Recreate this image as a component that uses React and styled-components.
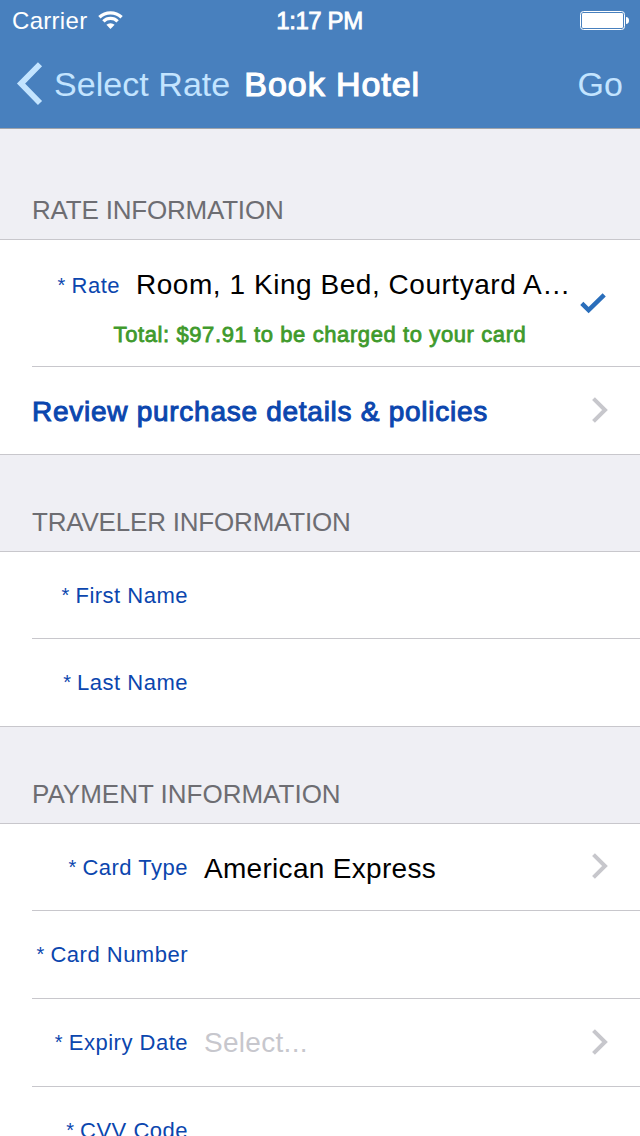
import React from 'react'
import styled, { createGlobalStyle } from 'styled-components';

const BackIcon = () => (
    <svg width="28" height="44" viewBox="0 0 28 44">
        <path d="M24 2.3 L5 21.6 L24 41" fill="none" stroke="#c3e4ff" strokeWidth="5.8" />
    </svg>
)

const WifiIcon = () => (
    <svg width="26" height="19" viewBox="0 0 26 19">
        <g fill="none" stroke="#fff" strokeWidth="3.3">
            <path d="M1.4 6.2 A16.2 16.2 0 0 1 23.6 6.2" />
            <path d="M5.4 10.4 A10 10 0 0 1 19.6 10.4" />
        </g>
        <path d="M12.5 18 L8.4 13.8 A6.2 6.2 0 0 1 16.6 13.8 Z" fill="#fff" />
    </svg>
)

const BatteryIcon = () => (
    <svg width="50" height="20" viewBox="0 0 50 20">
        <rect x="0.5" y="0.5" width="44" height="18" rx="3" fill="none" stroke="#fff" />
        <rect x="2" y="2" width="41" height="15" rx="1.2" fill="#fff" />
        <path d="M46 6 Q49 6.4 49 9.5 Q49 12.6 46 13 Z" fill="#fff" />
    </svg>
)

const CheckIcon = () => (
    <svg width="28" height="24" viewBox="0 0 28 24">
        <path d="M1.8 11.4 L8.6 18 L24.2 2.8" fill="none" stroke="#2a6ebb" strokeWidth="4.5" />
    </svg>
)

const ChevronIcon = () => (
    <Chevron width="16" height="26" viewBox="0 0 16 26">
        <path d="M1.5 1.6 L13 13 L1.5 24.4" fill="none" stroke="#c7c7cc" strokeWidth="4" />
    </Chevron>
)

const FieldLabel = ({ children, width }) => (
    <Label $width={width}><Star>*</Star> {children}</Label>
)

const Field = ({ label, value, placeholder, arrow }) => (
    <Row>
        <FieldLabel>{label}</FieldLabel>
        <Value $muted={!value}>{value || placeholder}</Value>
        {arrow && <ChevronIcon />}
    </Row>
)

const App = () => {
    return (
        <Screen>
            <GlobalStyle />
            <Header>
                <StatusBar>
                    <Carrier>Carrier <WifiIcon /></Carrier>
                    <Clock>1:17 PM</Clock>
                    <Battery><BatteryIcon /></Battery>
                </StatusBar>
                <NavBar>
                    <BackIcon />
                    <NavLink>Select Rate</NavLink>
                    <Title>Book Hotel</Title>
                    <NavLink>Go</NavLink>
                </NavBar>
            </Header>

            <SectionTitle $height={111} $spacing={-0.2}>RATE INFORMATION</SectionTitle>
            <Group>
                <RateRow>
                    <RateLine>
                        <FieldLabel width={88}>Rate</FieldLabel>
                        <Value $spacing={0.54}>Room, 1 King Bed, Courtyard A…</Value>
                    </RateLine>
                    <CheckSlot><CheckIcon /></CheckSlot>
                    <Total>Total: $97.91 to be charged to your card</Total>
                </RateRow>
                <Row>
                    <ReviewLink>Review purchase details &amp; policies</ReviewLink>
                    <ChevronIcon />
                </Row>
            </Group>

            <SectionTitle $spacing={-0.2}>TRAVELER INFORMATION</SectionTitle>
            <Group>
                <Field label="First Name" />
                <Field label="Last Name" />
            </Group>

            <SectionTitle>PAYMENT INFORMATION</SectionTitle>
            <Group>
                <Field label="Card Type" value="American Express" arrow />
                <Field label="Card Number" />
                <Field label="Expiry Date" placeholder="Select..." arrow />
                <Field label="CVV Code" />
            </Group>
        </Screen>
    )
}

export default App;

const GlobalStyle = createGlobalStyle`
    * {
        box-sizing: border-box;
    }
    body {
        margin: 0;
        overflow: hidden;
        font-family: "Liberation Sans", Arial, sans-serif;
    }
    svg {
        display: block;
        flex: none;
    }
`

const Screen = styled.div`
    width: 640px;
    height: 1136px;
    overflow: hidden;
    background: #efeff4;
`

const Header = styled.div`
    height: 129px;
    background: #4880be;
    border-bottom: 1px solid #a0a4ab;
    color: #fff;
`

const StatusBar = styled.div`
    display: grid;
    grid-template-columns: 1fr auto 1fr;
    height: 40px;
    padding: 1px 10px 0 12px;
    align-items: center;
    font-size: 24px;
    line-height: 40px;
`

const Carrier = styled.div`
    display: flex;
    align-items: center;
    gap: 11px;
    letter-spacing: 0.3px;

    svg {
        margin-bottom: 1px;
    }
`

const Clock = styled.div`
    margin-right: 3px;
    letter-spacing: -0.4px;
    -webkit-text-stroke: 0.8px #fff;
`

const Battery = styled.div`
    display: flex;
    justify-content: flex-end;
`

const NavBar = styled.div`
    display: flex;
    align-items: center;
    height: 88px;
    padding: 0 17px 0 16px;
    font-size: 34px;
`

const NavLink = styled.a`
    margin-left: 10px;
    color: #c3e4ff;
    letter-spacing: 0.05px;
`

const Title = styled.div`
    flex: 1;
    margin-left: 14px;
    letter-spacing: 0.95px;
    -webkit-text-stroke: 1.2px #fff;
`

const SectionTitle = styled.div`
    display: flex;
    align-items: flex-end;
    height: ${(props) => props.$height || 97}px;
    padding: 0 32px 14px;
    border-bottom: 1px solid #c8c7cc;
    color: #6d6d72;
    font-size: 26px;
    letter-spacing: ${(props) => props.$spacing || 0}px;
    line-height: 30px;
`

const Group = styled.div`
    background: #fff;
    border-bottom: 1px solid #c8c7cc;
`

const Label = styled.div`
    width: ${(props) => props.$width || 156}px;
    margin-right: 16px;
    color: #0b46ae;
    font-size: 22px;
    letter-spacing: 0.5px;
    line-height: 26px;
    text-align: right;
    white-space: nowrap;
`

const Star = styled.span`
    font-size: 20px;
    line-height: 1;
    letter-spacing: -0.5px;
    vertical-align: 1px;
`

const Value = styled.div`
    flex: 1;
    padding-top: 1px;
    color: ${(props) => (props.$muted ? '#c7c7cd' : '#000')};
    font-size: 28px;
    letter-spacing: ${(props) => props.$spacing || 0.3}px;
    white-space: nowrap;
`

const Chevron = styled.svg`
    margin-bottom: 2px;
`

const ReviewLink = styled.a`
    flex: 1;
    padding-top: 2px;
    color: #0b46ae;
    font-size: 28px;
    letter-spacing: 0.73px;
    -webkit-text-stroke: 1px #0b46ae;
`

const Row = styled.div`
    display: flex;
    align-items: center;
    height: 88px;
    margin-left: 32px;
    padding-right: 32px;
    border-bottom: 1px solid #c8c7cc;

    &:last-child {
        height: 87px;
        border-bottom: none;
    }
    &:first-child {
        height: 87px;
    }
    &:first-child ${Label} {
        padding-top: 1px;
    }
    &:first-child ${Value} {
        padding-top: 3px;
    }
`

const RateRow = styled.div`
    display: grid;
    grid-template-columns: 548px 1fr;
    grid-template-rows: 76px 1fr;
    height: 127px;
    margin-left: 32px;
    border-bottom: 1px solid #c8c7cc;
`

const RateLine = styled.div`
    display: flex;
    align-items: center;
    height: 89px;

    ${Label} {
        padding-top: 2px;
    }
    ${Value} {
        padding-top: 0;
    }
`

const CheckSlot = styled.div`
    padding-top: 52px;
`

const Total = styled.div`
    grid-column: 1 / -1;
    padding: 6px 32px 0 0;
    color: #3f9a2c;
    font-size: 22px;
    letter-spacing: 0.6px;
    line-height: 26px;
    text-align: center;
    -webkit-text-stroke: 0.8px #3f9a2c;
`
